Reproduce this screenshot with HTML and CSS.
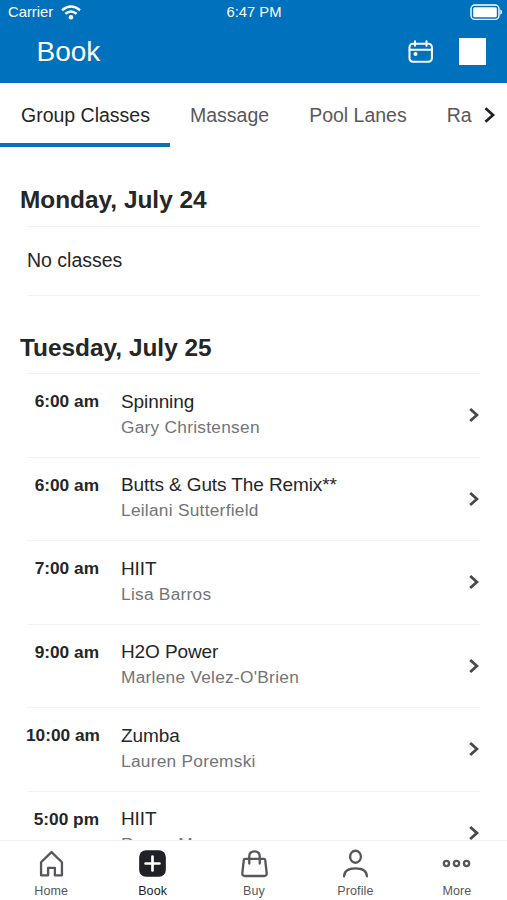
FILE: index.html
```html
<!DOCTYPE html>
<html lang="en">
<head>
<meta charset="utf-8">
<title>Book</title>
<link rel="stylesheet" href="styles.css">
</head>
<body>
<svg class="sprite" aria-hidden="true">
  <symbol id="chevron" viewBox="0 0 12 16"><path d="M2.2 2 8.9 8l-6.7 6"/></symbol>
</svg>
<div class="app">
  <header class="header">
    <div class="status">
      <div class="carrier"><span>Carrier</span>
        <svg class="wifi" width="20" height="15" viewBox="0 0 20 15"><path d="M1 5.2Q10-2.2 19 5.2M4.4 8.8q5.6-4.5 11.2 0"/><circle cx="10" cy="12.3" r="2.3"/></svg>
      </div>
      <span class="clock">6:47 PM</span>
      <svg class="battery" width="33" height="17" viewBox="0 0 33 17"><rect class="shell" x="1" y="1" width="28" height="14.4" rx="4"/><rect class="charge" x="3.2" y="3.2" width="23.6" height="10" rx="1.5"/><path class="charge" d="M30.3 5.6q1.8.4 1.8 2.5t-1.8 2.6z"/></svg>
    </div>
    <div class="titlebar">
      <h1 class="title">Book</h1>
      <svg class="calendar" width="26" height="24" viewBox="0 0 26 24"><rect x="1.5" y="3.7" width="22.4" height="18" rx="3.4"/><path d="M1.5 9.7h22.4M7 1.2v4.6M18.5 1.2v4.6"/><circle cx="7.5" cy="14" r="2"/></svg>
      <span class="block"></span>
    </div>
  </header>
  <nav class="tabs">
    <a class="tab active">Group Classes</a>
    <a class="tab">Massage</a>
    <a class="tab">Pool Lanes</a>
    <a class="tab">Ra</a>
    <svg class="chev next" viewBox="0 0 12 16"><use href="#chevron"/></svg>
  </nav>
  <main class="schedule">
    <section class="day">
      <h2>Monday, July 24</h2>
      <p class="empty">No classes</p>
    </section>
    <section class="day second">
      <h2>Tuesday, July 25</h2>
      <div class="row"><span class="time">6:00 am</span><div class="info"><b>Spinning</b><i>Gary Christensen</i></div><svg class="chev" viewBox="0 0 12 16"><use href="#chevron"/></svg></div>
      <div class="row"><span class="time">6:00 am</span><div class="info"><b>Butts &amp; Guts The Remix**</b><i>Leilani Sutterfield</i></div><svg class="chev" viewBox="0 0 12 16"><use href="#chevron"/></svg></div>
      <div class="row"><span class="time">7:00 am</span><div class="info"><b>HIIT</b><i>Lisa Barros</i></div><svg class="chev" viewBox="0 0 12 16"><use href="#chevron"/></svg></div>
      <div class="row"><span class="time">9:00 am</span><div class="info"><b>H2O Power</b><i>Marlene Velez-O'Brien</i></div><svg class="chev" viewBox="0 0 12 16"><use href="#chevron"/></svg></div>
      <div class="row"><span class="time">10:00 am</span><div class="info"><b>Zumba</b><i>Lauren Poremski</i></div><svg class="chev" viewBox="0 0 12 16"><use href="#chevron"/></svg></div>
      <div class="row"><span class="time">5:00 pm</span><div class="info"><b>HIIT</b><i>Renee M</i></div><svg class="chev" viewBox="0 0 12 16"><use href="#chevron"/></svg></div>
    </section>
  </main>
  <nav class="bottom">
    <a class="item"><svg viewBox="0 0 30 30"><path d="M4.2 27.2V13.7L15 3.2l10.8 10.5v13.5h-7.3v-7.7h-7v7.7z"/></svg><span>Home</span></a>
    <a class="item current"><svg viewBox="0 0 30 30"><rect class="solid" x="1.2" y="1.2" width="27.6" height="27.6" rx="7"/><path class="plus" d="M15 7.8v14.4M7.8 15h14.4"/></svg><span>Book</span></a>
    <a class="item"><svg viewBox="0 0 30 30"><path d="M5.2 10.3h19.6q1.2 0 1.3 1.2l1.5 13.4q.2 3-2.6 3H5q-2.8 0-2.6-3l1.5-13.4q.1-1.2 1.3-1.2zM9.6 15V7.6q0-5.2 5.4-5.2t5.4 5.2V15"/></svg><span>Buy</span></a>
    <a class="item"><svg viewBox="0 0 30 30"><ellipse cx="15" cy="8" rx="5.6" ry="6.2"/><path d="M3.2 28.2q.3-8.2 11.8-8.2t11.8 8.2"/></svg><span>Profile</span></a>
    <a class="item"><svg viewBox="0 0 30 30"><circle cx="4.6" cy="15" r="2.7"/><circle cx="15" cy="15" r="2.7"/><circle cx="25.4" cy="15" r="2.7"/></svg><span>More</span></a>
  </nav>
</div>
</body>
</html>
```
FILE: styles.css
```css
* { box-sizing: border-box; }
body { margin: 0; background: #fff; font-family: "Liberation Sans", Arial, sans-serif; color: #252628; }
svg { fill: none; stroke: currentColor; stroke-linecap: round; stroke-linejoin: round; display: block; flex: none; }
h1, h2, p { margin: 0; }
.sprite { display: none; }
.app { width: 507px; height: 900px; display: flex; flex-direction: column; overflow: hidden; }

.header { flex: none; height: 83px; background: #0071bc; color: #fff; }
.status { display: grid; grid-template-columns: 1fr auto 1fr; align-items: center; height: 25px; padding: 0 4px 0 8px; font-size: 14.8px; line-height: 25px; }
.carrier { display: flex; align-items: center; gap: 8px; }
.clock { margin-left: -3px; }
.wifi { stroke-width: 2.4; stroke-linecap: butt; }
.wifi circle { fill: #fff; stroke: none; }
.battery { justify-self: end; }
.shell { stroke-width: 1.4; }
.charge { fill: #fff; stroke: none; }
.titlebar { display: flex; align-items: center; height: 54px; padding: 0 21px 0 36.5px; }
.title { flex: 1; font-size: 28px; font-weight: 400; line-height: 54px; }
.calendar { stroke-width: 2; margin-right: 25px; margin-top: -1px; }
.calendar circle { fill: #fff; stroke: none; }
.block { width: 27px; height: 27px; background: #fff; margin-top: -1px; }

.tabs { flex: none; display: flex; align-items: center; height: 64px; font-size: 19.5px; color: #58595d; white-space: nowrap; }
.tab { height: 64px; line-height: 64px; padding: 0 20px; }
.active { width: 170px; padding-left: 21px; padding-right: 0; color: #252628; border-bottom: 4px solid #0871b8; }
.chev { width: 12px; height: 16px; stroke-width: 2.8; stroke-linecap: butt; stroke-linejoin: miter; color: #47484b; }
.next { width: 13.5px; height: 18px; stroke-width: 2.4; color: #202124; margin-left: -9px; }

.schedule { flex: 1; min-height: 0; overflow: hidden; }
h2 { font-size: 24.4px; line-height: 30px; padding: 0 20px; }
.day { padding-top: 38px; }
.second { padding-top: 37px; }
.empty { margin: 11px 27px 0; height: 70px; border: solid #f2f2f3; border-width: 1px 0; font-size: 19.5px; line-height: 66px; }
.row { margin: 0 27px; height: 83.5px; border-top: 1px solid #f1f1f2; display: flex; }
.second h2 { margin-bottom: 10px; }
.time { width: 73px; margin-left: -1px; padding-top: 16px; text-align: right; white-space: nowrap; font-size: 17.3px; line-height: 23px; font-weight: 700; }
.info { flex: 1; margin-left: 22px; padding-top: 14.5px; }
.info b, .info i { display: block; font-style: normal; font-weight: 400; }
.info b { font-size: 19px; line-height: 25px; letter-spacing: -.1px; }
.info i { font-size: 17.3px; line-height: 26px; letter-spacing: .27px; color: #737478; }
.row .chev { margin-top: 33px; }

.bottom { flex: none; height: 60px; border-top: 1px solid #efeff0; background: #fff; display: flex; }
.item { flex: 1; display: flex; flex-direction: column; align-items: center; padding-top: 8px; font-size: 12.5px; line-height: 16px; color: #56575b; }
.item svg { width: 29px; height: 29px; margin-left: 1px; stroke-width: 2.4; }
.item span { margin-top: 5px; margin-left: 1px; letter-spacing: .1px; }
.current { color: #202124; }
.solid { fill: #202124; stroke: none; }
.plus { stroke: #fff; stroke-width: 2.8; }
```
